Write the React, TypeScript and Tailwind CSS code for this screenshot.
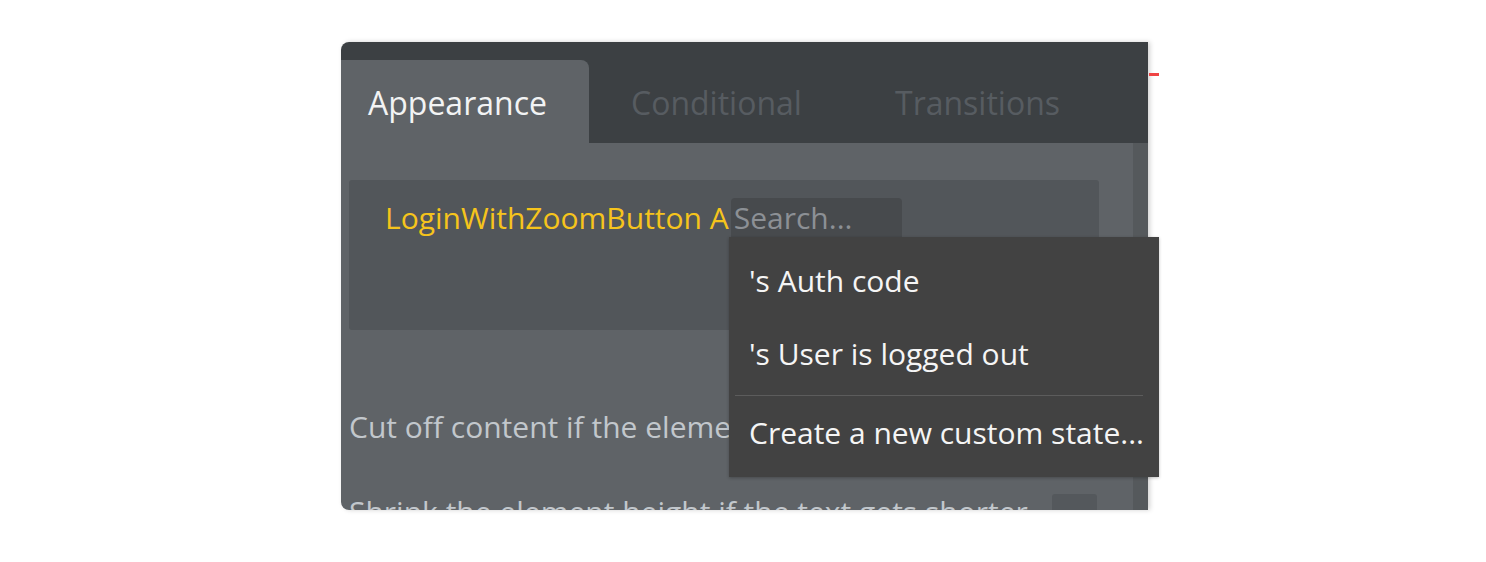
import React from "react";

export default function App() {
  return (
    <div className="w-[1486px] h-[562px] bg-white pt-[42px] pl-[341px] font-['Open_Sans',sans-serif] antialiased">
      <div className="relative w-[807px] h-[468px]">
        <div className="w-[807px] h-[468px] rounded-l-lg overflow-hidden flex flex-col shadow-[2px_0_5px_rgba(0,0,0,0.18)]">
          {/* Tab bar */}
          <div className="h-[101px] bg-[#3c4043] flex items-end shrink-0">
            <div className="w-[248px] h-[83px] bg-[#5f6367] rounded-tr-lg flex items-center pl-[27px] pt-[2px]">
              <span className="text-[32px] leading-[44px] text-[#f2f3f4]">Appearance</span>
            </div>
            <div className="w-[264px] h-[83px] flex items-center pl-[42px] pt-[2px]">
              <span className="text-[32px] leading-[44px] text-[#575c61]">Conditional</span>
            </div>
            <div className="h-[83px] flex items-center pl-[42px] pt-[2px]">
              <span className="text-[32px] leading-[44px] text-[#575c61]">Transitions</span>
            </div>
          </div>
          {/* Body */}
          <div className="flex-1 flex bg-[#5f6367] min-h-0">
            <div className="flex-1 pl-[8px] pt-[37px] flex flex-col">
              <div className="w-[750px] h-[150px] bg-[#52565a] rounded-[3px] pl-[36px] pt-[18px] shrink-0">
                <div className="flex items-start">
                  <span className="text-[30px] leading-[40px] text-[#f6c41c] whitespace-nowrap">LoginWithZoomButton A</span>
                  <div className="w-[171px] h-[40px] ml-[2px] bg-[#474a4d] rounded-t-[4px] pl-[3px]">
                    <span className="text-[30px] leading-[40px] text-[#8c9095]">Search...</span>
                  </div>
                </div>
              </div>
              <div className="mt-[77px] flex items-start justify-between w-[750px] shrink-0">
                <span className="text-[30px] leading-[40px] text-[#c2c7cc] whitespace-nowrap">Cut off content if the element is too small</span>
              </div>
              <div className="mt-[45px] flex items-start justify-between w-[748px] shrink-0">
                <span className="text-[30px] leading-[40px] text-[#c2c7cc] whitespace-nowrap">Shrink the element height if the text gets shorter</span>
                <div className="w-[45px] h-[45px] mt-[2px] bg-[#54585c] rounded-[3px]" />
              </div>
            </div>
            <div className="w-[15px] bg-[#55595c] shrink-0" />
          </div>
        </div>

        {/* red marker outside panel */}
        <div className="absolute left-[808px] top-[31px] w-[10px] h-[3px] bg-[#ef4444]" />

        {/* Dropdown menu */}
        <div className="absolute left-[388px] top-[195px] w-[430px] bg-[#424242] pt-[8px] pb-[8px] shadow-[0_1px_3px_rgba(0,0,0,0.25)]">
          <div className="h-[73px] pt-[16px] pl-[20px]">
            <span className="text-[30px] leading-[40px] text-[#f5f5f5]">'s Auth code</span>
          </div>
          <div className="h-[73px] pt-[16px] pl-[20px]">
            <span className="text-[30px] leading-[40px] text-[#f5f5f5]">'s User is logged out</span>
          </div>
          <div className="mt-[4px] ml-[6px] mr-[16px] h-px bg-[#5c5c5c]" />
          <div className="h-[73px] pt-[17px] pl-[20px]">
            <span className="text-[30px] leading-[40px] text-[#f5f5f5] whitespace-nowrap">Create a new custom state...</span>
          </div>
        </div>
      </div>
    </div>
  );
}
